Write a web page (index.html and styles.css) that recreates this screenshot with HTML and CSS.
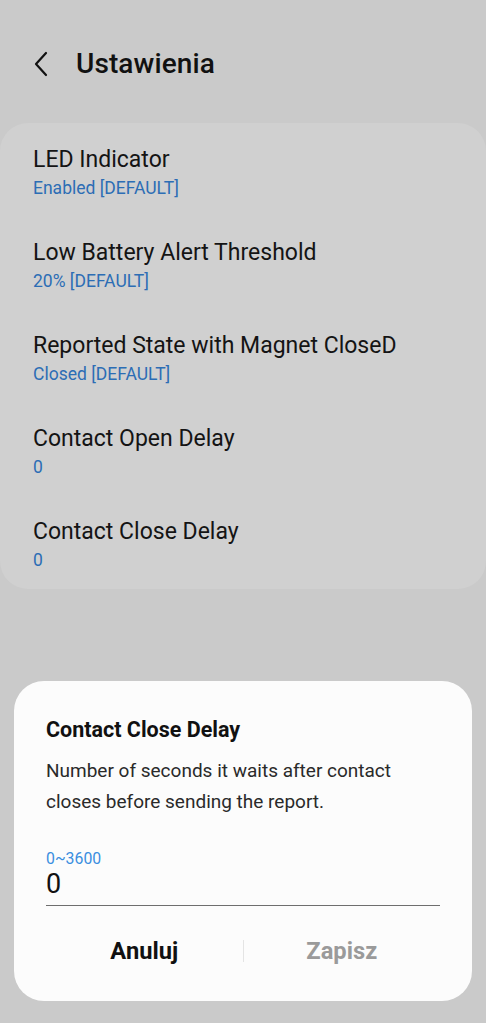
FILE: index.html
```html
<!DOCTYPE html>
<html lang="pl">
<head>
  <meta charset="UTF-8" />
  <meta name="viewport" content="width=device-width, initial-scale=1.0"/>
  <title>Ustawienia</title>
  <link rel="stylesheet" href="styles.css">
</head>
<body>

<div class="header">
  <span class="back">
    <svg width="16" height="26" viewBox="0 0 16 26"><path d="M13 2 L3 13 L13 24" fill="none" stroke="#111" stroke-width="2.2" stroke-linecap="round" stroke-linejoin="round"/></svg>
  </span>
  <h1 class="title">Ustawienia</h1>
</div>

<div class="card">
  <div class="item">
    <div class="item-title">LED Indicator</div>
    <div class="item-value">Enabled [DEFAULT]</div>
  </div>
  <div class="item">
    <div class="item-title">Low Battery Alert Threshold</div>
    <div class="item-value">20% [DEFAULT]</div>
  </div>
  <div class="item">
    <div class="item-title">Reported State with Magnet CloseD</div>
    <div class="item-value">Closed [DEFAULT]</div>
  </div>
  <div class="item">
    <div class="item-title">Contact Open Delay</div>
    <div class="item-value">0</div>
  </div>
  <div class="item">
    <div class="item-title">Contact Close Delay</div>
    <div class="item-value">0</div>
  </div>
</div>

<div class="dialog">
  <div class="dialog-title">Contact Close Delay</div>
  <p class="dialog-text">Number of seconds it waits after contact closes before sending the report.</p>
  <div class="range">0~3600</div>
  <div class="field">0</div>
  <div class="buttons">
    <button class="btn">Anuluj</button>
    <span class="sep"></span>
    <button class="btn disabled">Zapisz</button>
  </div>
</div>

</body>
</html>
```

FILE: styles.css
```css
body {
  margin: 0;
  height: 1023px;
  background: #cacaca;
  font-family: Roboto, "Noto Sans", sans-serif;
  color: #111;
  overflow: hidden;
  position: relative;
}

.header {
  display: flex;
  align-items: center;
  padding-top: 44px;
  height: 40px;
}

.back {
  display: flex;
  margin-left: 33px;
  width: 43px;
}

.title {
  margin: 0;
  font-size: 28px;
  font-weight: 500;
  line-height: 40px;
  letter-spacing: 0.1px;
}

.card {
  margin-top: 39px;
  background: #d0d0d0;
  border-radius: 28px;
  padding: 23px 0 15px 33px;
  display: flex;
  flex-direction: column;
  gap: 37px;
}

.item-title {
  font-size: 23px;
  line-height: 28px;
  color: #141414;
}

.item-value {
  font-size: 17.5px;
  line-height: 28px;
  color: #2c6db5;
}

.dialog {
  position: absolute;
  left: 14px;
  right: 14px;
  bottom: 22px;
  height: 320px;
  box-sizing: border-box;
  background: #fcfcfc;
  border-radius: 30px;
  padding: 35px 32px 0;
}

.dialog-title {
  font-size: 21.5px;
  font-weight: 700;
  line-height: 28px;
}

.dialog-text {
  margin: 11px 0 0;
  font-size: 19px;
  line-height: 31px;
  color: #2a2a2a;
}

.range {
  margin-top: 32px;
  font-size: 15.8px;
  line-height: 20px;
  color: #3a8ee0;
}

.field {
  font-size: 27px;
  line-height: 30px;
  padding-bottom: 6px;
  border-bottom: 1.5px solid #6e6e6e;
}

.buttons {
  display: flex;
  align-items: center;
  height: 56px;
  margin-top: 17px;
}

.btn {
  flex: 1;
  background: none;
  border: none;
  font-family: inherit;
  font-size: 23.7px;
  font-weight: 700;
  color: #111;
  padding: 0;
}

.btn.disabled {
  color: #9a9a9a;
}

.sep {
  width: 1px;
  height: 22px;
  background: #e4e4e4;
}
```
